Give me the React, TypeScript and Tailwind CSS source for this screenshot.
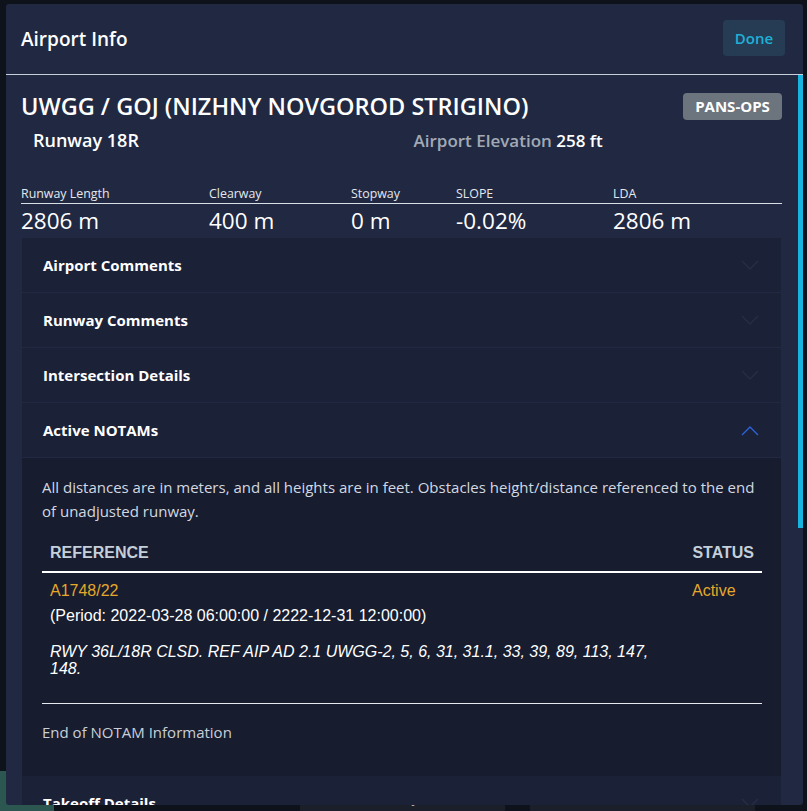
import React from 'react';

const ui = { fontFamily: '"Open Sans", "Noto Sans", sans-serif' };
const arial = { fontFamily: '"Liberation Sans", Arial, sans-serif' };

const stats = [
  { label: 'Runway Length', value: '2806 m', w: 'w-[188px]' },
  { label: 'Clearway', value: '400 m', w: 'w-[142px]' },
  { label: 'Stopway', value: '0 m', w: 'w-[105px]' },
  { label: 'SLOPE', value: '-0.02%', w: 'w-[157px]' },
  { label: 'LDA', value: '2806 m', w: 'flex-1' },
];

function Chevron({ up, color }: { up?: boolean; color: string }) {
  return (
    <svg width="18" height="11" viewBox="0 0 18 11" fill="none">
      <path d={up ? 'M1 10 L9 2 L17 10' : 'M1 1 L9 9 L17 1'} stroke={color} strokeWidth="1.4" />
    </svg>
  );
}

function Row({ title, open }: { title: string; open?: boolean }) {
  return (
    <div className="flex h-[55px] items-center justify-between border-b border-[#222842] pl-[21px] pr-[22px]">
      <span className="text-[15px] font-bold text-white">{title}</span>
      <Chevron up={open} color={open ? '#2c63d8' : '#262d44'} />
    </div>
  );
}

export default function App() {
  return (
    <div className="relative h-[811px] w-[807px] overflow-hidden bg-[#0d121b]" style={ui}>
      {/* app behind the dialog */}
      <div className="flex h-full flex-col">
        <div className="flex-1" />
        <div className="flex h-[40px] text-[16px] font-bold text-[#a9b0bb]">
          <div className="w-[54px] bg-[#2b5750]" />
          <div className="w-[246px] bg-[#0d121b]" />
          <div className="flex w-[205px] justify-center bg-[#1a1f29] pt-[13px]">LDG Dispatch</div>
          <div className="w-[25px] bg-[#0d121b]" />
          <div className="flex w-[225px] justify-center bg-[#1a1f29] pt-[13px]">LDG Enroute</div>
          <div className="flex-1" />
        </div>
      </div>

      {/* dialog */}
      <div className="absolute left-[6px] top-[4px] flex h-[801px] w-[797px] flex-col overflow-hidden rounded-[3px] bg-[#212942]">
        <div className="flex h-[71px] shrink-0 items-center justify-between border-b border-[#c6d0dc] pl-[15px] pr-[18px]">
          <span className="text-[19px] font-semibold text-white">Airport Info</span>
          <button className="mt-[-2px] h-[36px] w-[62px] rounded-[4px] bg-[#263c54] text-[15px] font-semibold text-[#1fb0d6]">Done</button>
        </div>

        <div className="relative flex-1 overflow-hidden pl-[15px] pr-[21px]">
          <div className="absolute right-0 top-0 h-[453px] w-[5px] bg-[#18b4e0]" />

          <div className="mt-[18px] flex h-[27px] items-center justify-between">
            <span className="text-[23.5px] font-semibold text-white">UWGG / GOJ (NIZHNY NOVGOROD STRIGINO)</span>
            <span className="flex h-[27px] w-[99px] items-center justify-center rounded-[4px] bg-[#6c747e] text-[15px] font-bold text-white">PANS-OPS</span>
          </div>

          <div className="mt-[7px] grid h-[26px] grid-cols-2 items-center">
            <span className="px-[12px] text-[18px] font-semibold text-white">Runway 18R</span>
            <span className="px-[12px] text-[17px] font-semibold text-[#a1a9b6]">
              Airport Elevation <span className="text-white">258 ft</span>
            </span>
          </div>

          <div className="mt-[33px] flex border-b border-[#d8dee6] pb-[1px] leading-[16px]">
            {stats.map(s => (
              <span key={s.label} className={`${s.w} text-[12.4px] text-[#e4e8ee]`}>{s.label}</span>
            ))}
          </div>
          <div className="flex h-[34px] items-center">
            {stats.map(s => (
              <span key={s.label} className={`${s.w} text-[22.5px] text-white`}>{s.value}</span>
            ))}
          </div>

          <div className="ml-[1px] mr-[1px] bg-[#1b2137]">
            <Row title="Airport Comments" />
            <Row title="Runway Comments" />
            <Row title="Intersection Details" />
            <Row title="Active NOTAMs" open />

            <div className="bg-[#171c2f] pb-[32px] pl-[20px] pr-[19px] pt-[17px]">
              <p className="text-[15px] leading-[24px] text-[#d3d8e0]">
                All distances are in meters, and all heights are in feet. Obstacles height/distance referenced to the end of unadjusted runway.
              </p>

              <table className="mt-[13px] w-full border-collapse" style={arial}>
                <thead>
                  <tr className="border-b-2 border-white">
                    <th className="px-[8px] pb-[9px] pt-[8px] text-left text-[16px] font-bold leading-[18px] text-[#c5cfda]">REFERENCE</th>
                    <th className="w-[78px] px-[8px] pb-[9px] pt-[8px] text-right text-[16px] font-bold leading-[18px] text-[#c5cfda]">STATUS</th>
                  </tr>
                </thead>
                <tbody>
                  <tr className="border-b border-[#e6e9ee]">
                    <td className="px-[8px] pb-[26px] pt-[9px] align-top text-[16px] leading-[18px] text-white">
                      <div className="text-[#e5a82a]">A1748/22</div>
                      <div className="mt-[7px]">(Period: 2022-03-28 06:00:00 / 2222-12-31 12:00:00)</div>
                      <div className="mt-[18px] w-[612px] italic leading-[17px]">
                        RWY 36L/18R CLSD. REF AIP AD 2.1 UWGG-2, 5, 6, 31, 31.1, 33, 39, 89, 113, 147, 148.
                      </div>
                    </td>
                    <td className="px-[8px] pt-[9px] align-top text-[16px] leading-[18px] text-[#e5a82a]">Active</td>
                  </tr>
                </tbody>
              </table>

              <p className="mt-[16px] text-[15px] leading-[24px] text-[#c9cfd8]">End of NOTAM Information</p>
            </div>

            <Row title="Takeoff Details" />
          </div>
        </div>
      </div>
    </div>
  );
}
